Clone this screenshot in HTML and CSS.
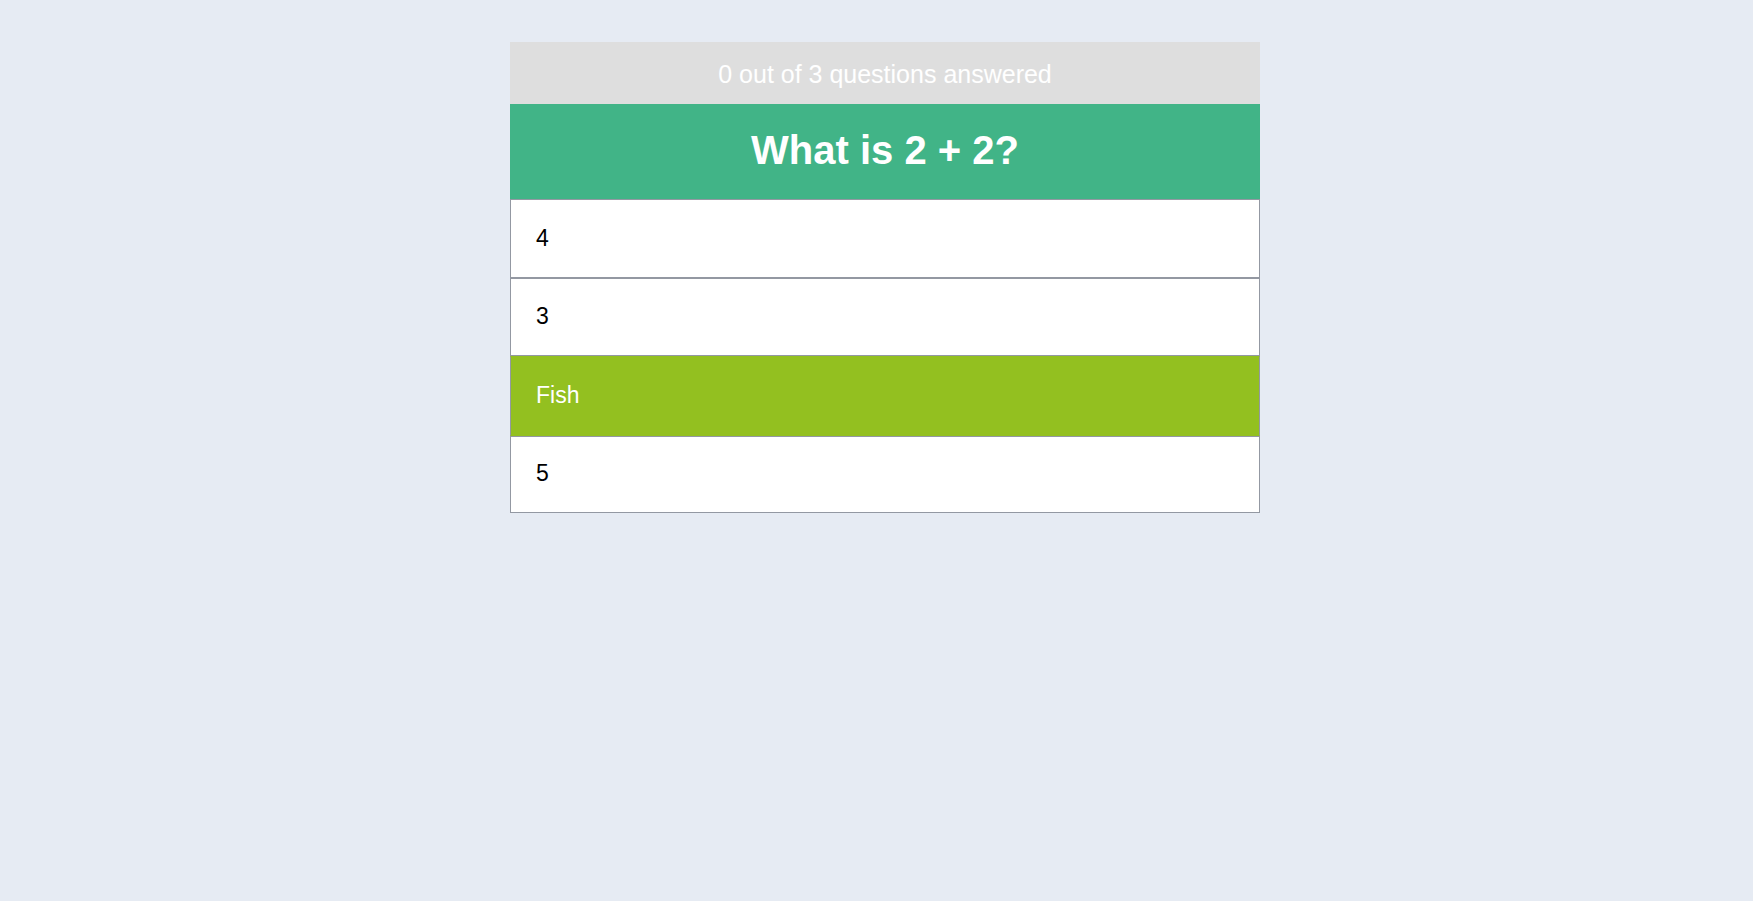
FILE: index.html
```html
<!DOCTYPE html>
<html lang="en">
<head>
<meta charset="utf-8">
<title>Quiz</title>
<link rel="stylesheet" href="styles.css">
</head>
<body>
<main class="page">
  <section class="quiz">
    <div class="progress">0 out of 3 questions answered</div>
    <h1 class="question">What is 2 + 2?</h1>
    <ul class="answers">
      <li class="answer">4</li>
      <li class="answer">3</li>
      <li class="answer answer--selected">Fish</li>
      <li class="answer">5</li>
    </ul>
  </section>
</main>
</body>
</html>
```
FILE: styles.css
```css
html, body {
  margin: 0;
  padding: 0;
}
body {
  background: #e6ebf3;
  font-family: "Liberation Sans", Arial, sans-serif;
  min-height: 901px;
}
.page {
  display: flex;
  justify-content: center;
  padding: 42px 0 0 17px;
}
.quiz {
  width: 750px;
  display: flex;
  flex-direction: column;
}
.progress {
  height: 62px;
  box-sizing: border-box;
  background: #dedede;
  color: #ffffff;
  font-size: 25px;
  display: flex;
  align-items: center;
  justify-content: center;
  padding-top: 2px;
}
.question {
  margin: 0;
  height: 95px;
  background: #41b487;
  color: #ffffff;
  font-size: 40px;
  font-weight: bold;
  display: flex;
  align-items: center;
  justify-content: center;
  padding-bottom: 2px;
  box-sizing: border-box;
}
.answers {
  list-style: none;
  margin: 0;
  padding: 0;
  display: flex;
  flex-direction: column;
}
.answer {
  height: 78px;
  box-sizing: border-box;
  border: 1px solid #9398a2;
  background: #ffffff;
  color: #000000;
  font-size: 23px;
  padding: 0 25px 2px;
  display: flex;
  align-items: center;
}
.answer:first-child {
  height: 79px;
  padding-bottom: 0;
}
.answer--selected {
  height: 80px;
  background: #93c020;
  border-color: #93c020;
  border-left-color: #9398a2;
  border-right-color: #9398a2;
  color: #ffffff;
}
.answer:last-child {
  height: 77px;
}
```
